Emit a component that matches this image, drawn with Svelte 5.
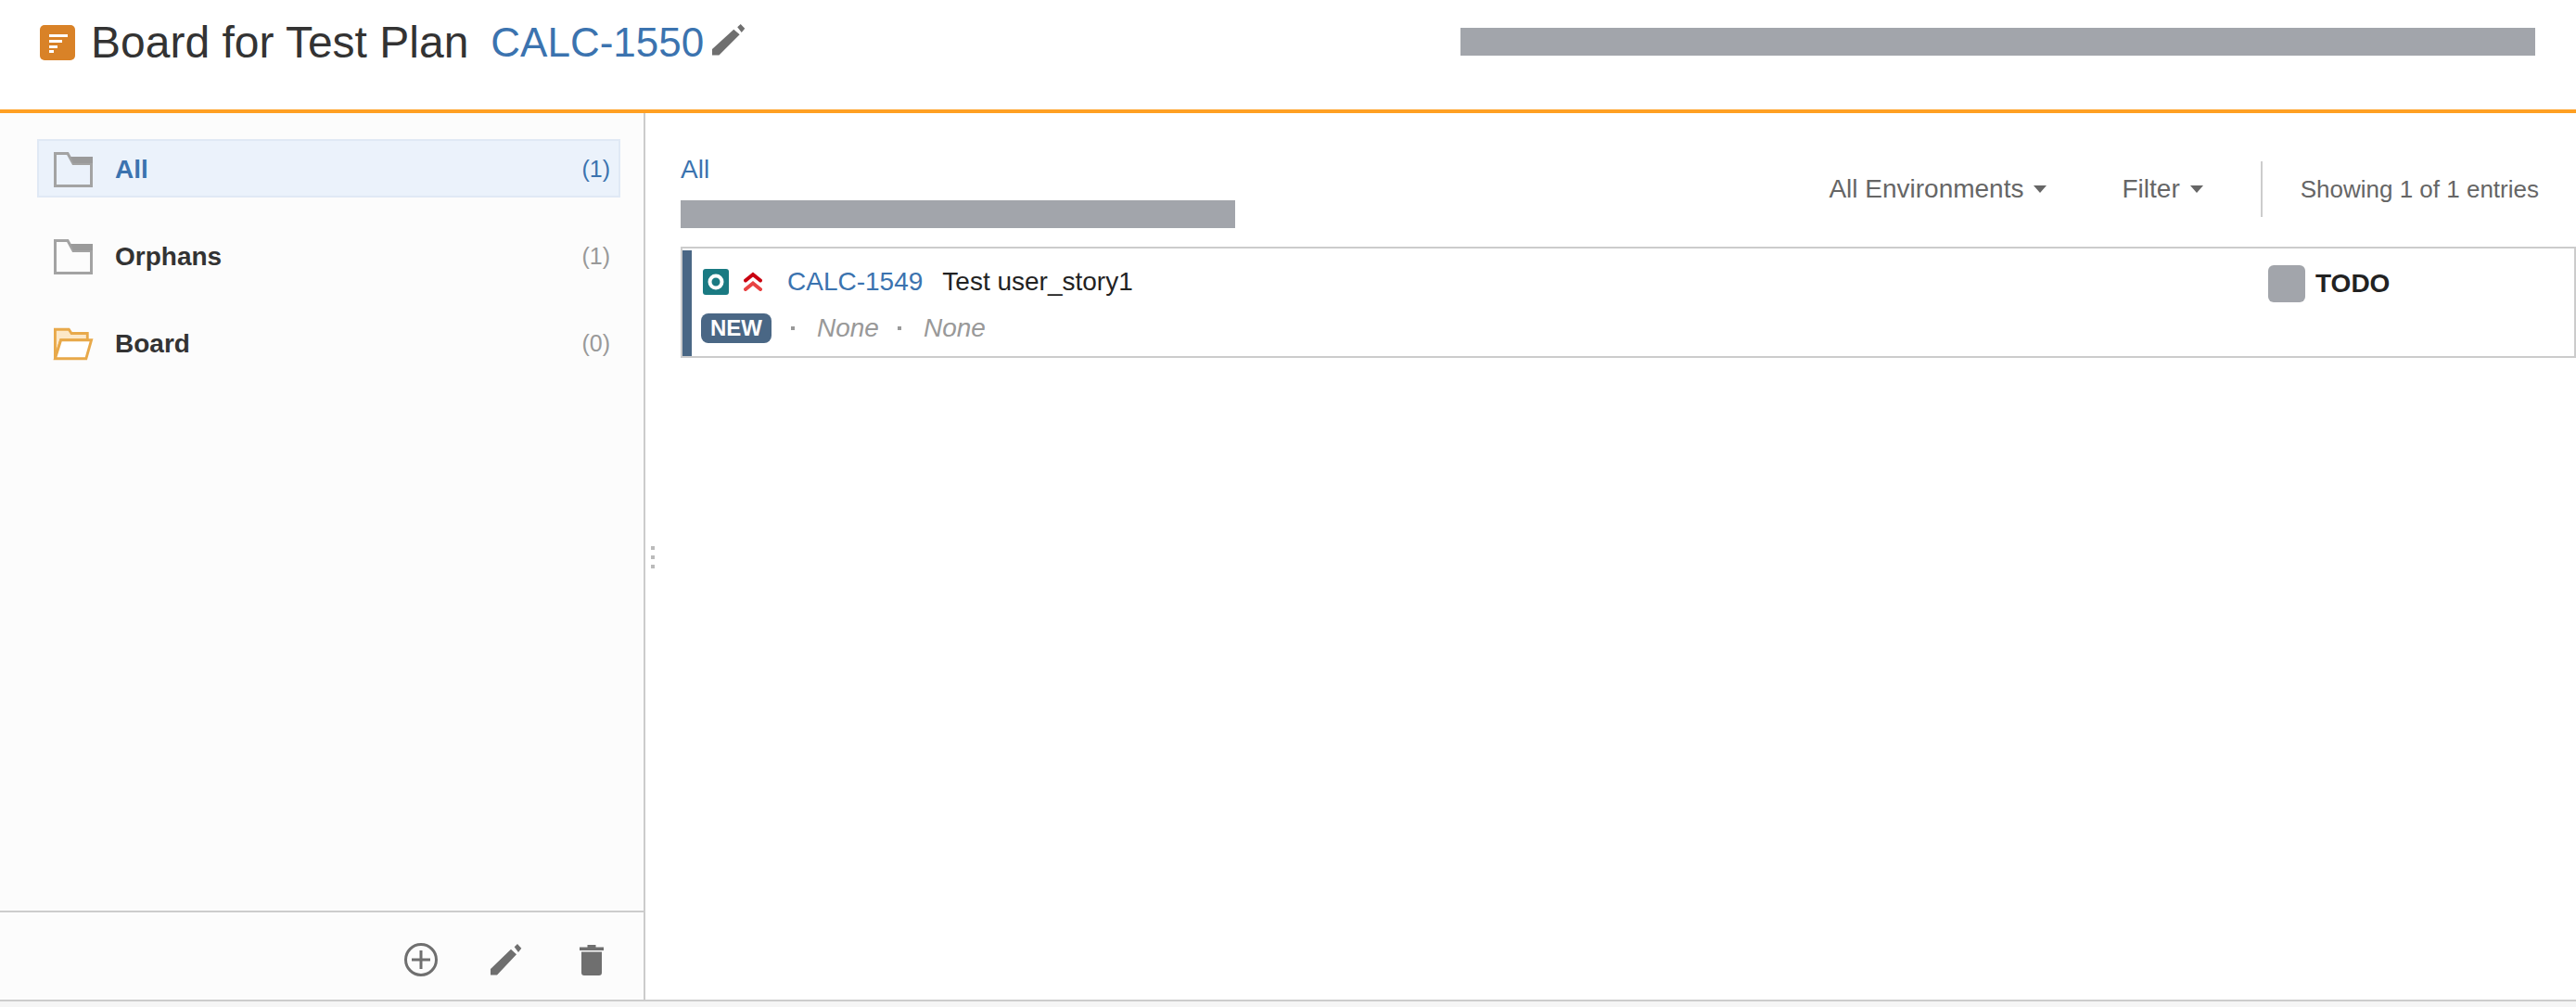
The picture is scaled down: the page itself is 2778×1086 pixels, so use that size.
<script lang="ts">
	// Folder tree entries on the left
	const folders = [
		{ name: 'All', count: 1, kind: 'plain', active: true },
		{ name: 'Orphans', count: 1, kind: 'plain', active: false },
		{ name: 'Board', count: 0, kind: 'open', active: false }
	];
</script>

<div class="page">
	<header class="header">
		<div class="title-row">
			<svg class="board-icon" width="38" height="38" viewBox="0 0 38 38">
				<rect width="38" height="38" rx="5" fill="#d98227" />
				<path d="M10 10h20v3H10zM10 16h14v3H10zM10 22h9v3h-9zM10 27h5v3h-5z" fill="#fff" />
			</svg>
			<h1 class="title">Board for Test Plan</h1>
			<a class="plan-key" href="#top">CALC-1550</a>
			<svg class="title-pencil" width="36" height="34" viewBox="0 0 34 34" preserveAspectRatio="none">
				<path d="M0 33.500V27L22 5.700 28 11.300 7 33.500z M25.700 3.300 29 0l4.300 4.700L30 9z" fill="#6f6f6f" />
			</svg>
			<div class="redacted top-redacted"></div>
		</div>
	</header>

	<div class="body">
		<aside class="sidebar">
			<ul class="folders">
				{#each folders as folder}
					<li class="folder" class:active={folder.active}>
						{#if folder.kind === 'plain'}
							<svg class="folder-icon" width="42" height="38" viewBox="0 0 42 38">
								<path d="M1.500 1.500H15L21 12.500H40.500V36.500H1.500Z" fill="none" stroke="#a3a3a3" stroke-width="3" />
								<path d="M18 5H42V12H21Z" fill="#9a9a9a" />
							</svg>
						{:else}
							<svg class="folder-icon" width="44" height="36" viewBox="0 0 44 36">
								<path d="M1.500 34.500V1.500H17L20 6H38V13.500H8Z" fill="#fce8c8" stroke="#e8a94a" stroke-width="3" />
								<path d="M1.500 34.500 8 13.500H42.500L36.500 34.500Z" fill="#fff" stroke="#e8a94a" stroke-width="3" />
							</svg>
						{/if}
						<span class="folder-name">{folder.name}</span>
						<span class="folder-count">({folder.count})</span>
					</li>
				{/each}
			</ul>
			<div class="sidebar-actions">
				<svg width="38" height="38" viewBox="0 0 38 38">
					<circle cx="19" cy="19" r="16.500" fill="none" stroke="#6f6f6f" stroke-width="3" />
					<path d="M19 9v20M9 19h20" stroke="#6f6f6f" stroke-width="3" />
				</svg>
				<svg width="34" height="34" viewBox="0 0 34 34">
					<path d="M0 33.500V27L22 5.700 28 11.300 7 33.500z M25.700 3.300 29 0l4.300 4.700L30 9z" fill="#6f6f6f" />
				</svg>
				<svg class="trash" width="26" height="33" viewBox="0 0 26 33">
					<path d="M0 2.500h8.500V0h9v2.500H26V6H0zM2 7.500h22V30a3 3 0 0 1-3 3H5a3 3 0 0 1-3-3z" fill="#6f6f6f" />
				</svg>
			</div>
		</aside>

		<main class="content">
			<div class="drag-handle"><i></i><i></i><i></i></div>
			<div class="toolbar">
				<div class="crumbs">
					<a class="crumb" href="#top">All</a>
					<div class="redacted crumb-redacted"></div>
				</div>
				<div class="controls">
					<span class="dropdown env">All Environments<b class="caret"></b></span>
					<span class="dropdown filter">Filter<b class="caret"></b></span>
					<span class="divider"></span>
					<span class="entries">Showing 1 of 1 entries</span>
				</div>
			</div>

			<div class="card">
				<div class="card-bar"></div>
				<div class="card-main">
					<div class="line-one">
						<svg class="type-icon" width="28" height="28" viewBox="0 0 28 28">
							<rect width="28" height="28" rx="3" fill="#1a7a82" />
							<circle cx="14" cy="14" r="6.500" fill="none" stroke="#fff" stroke-width="4" />
						</svg>
						<svg class="priority-icon" width="20" height="22" viewBox="0 0 20 22">
							<path d="M2 9.500 10 3l8 6.500" fill="none" stroke="#c9000f" stroke-width="4" stroke-linecap="round" />
							<path d="M2 19 10 12.500 18 19" fill="none" stroke="#e84343" stroke-width="4" stroke-linecap="round" />
						</svg>
						<a class="issue-key" href="#top">CALC-1549</a>
						<span class="issue-title">Test user_story1</span>
					</div>
					<div class="line-two">
						<span class="badge">NEW</span>
						<span class="dot first"></span>
						<em class="none">None</em>
						<span class="dot"></span>
						<em class="none">None</em>
					</div>
				</div>
				<div class="status">
					<span class="status-box"></span>
					<span class="status-text">TODO</span>
				</div>
			</div>
		</main>
	</div>
	<div class="page-foot"></div>
</div>

<style>
	:global(body) {
		background: #fff;
	}

	.page {
		display: flex;
		flex-direction: column;
		height: 1086px;
		font-family: 'Liberation Sans', Arial, sans-serif;
		font-size: 28px;
		color: #333;
	}

	a {
		color: #3b73af;
		text-decoration: none;
	}

	.redacted {
		background: #a2a5ab;
	}

	/* Header */
	.header {
		height: 118px;
		flex: none;
		border-bottom: 4px solid #ffa023;
	}

	.title-row {
		display: flex;
		align-items: center;
		height: 90px;
		padding: 0 44px 0 43px;
	}

	.board-icon {
		flex: none;
		margin: 2px 17px 0 0;
	}

	.title {
		margin: 2px 24px 0 0;
		font-size: 48px;
		font-weight: 400;
		line-height: 56px;
		color: #333;
	}

	.plan-key {
		margin-top: 2px;
		font-size: 44px;
		line-height: 56px;
	}

	.title-pencil {
		margin-left: 9px;
		margin-top: -5px;
	}

	.top-redacted {
		width: 1159px;
		height: 30px;
		margin-left: auto;
	}

	/* Body columns */
	.body {
		flex: 1;
		display: flex;
		min-height: 0;
		border-bottom: 2px solid #ccc;
	}

	.sidebar {
		flex: none;
		width: 694px;
		display: flex;
		flex-direction: column;
		background: #fcfcfc;
		border-right: 2px solid #ccc;
	}

	.folders {
		flex: 1;
		display: flex;
		flex-direction: column;
		gap: 31px;
		margin: 0;
		padding: 28px 25px 0 40px;
		list-style: none;
	}

	.folder {
		display: flex;
		align-items: center;
		height: 63px;
		box-sizing: border-box;
		padding: 2px 9px 0 16px;
		border: 2px solid transparent;
	}

	.folder.active {
		background: #ebf2fb;
		border-color: #e0e9f5;
	}

	.folder-icon {
		flex: none;
		width: 42px;
		margin-right: 24px;
		overflow: visible;
	}

	.folder-name {
		flex: 1;
		font-weight: 700;
	}

	.folder.active .folder-name,
	.folder.active .folder-count {
		color: #3b73af;
	}

	.folder-count {
		font-size: 25px;
		color: #999;
	}

	.sidebar-actions {
		flex: none;
		display: flex;
		align-items: center;
		gap: 56px;
		justify-content: flex-end;
		height: 96px;
		box-sizing: border-box;
		padding: 8px 43px 0 0;
		border-top: 2px solid #ccc;
	}

	.trash {
		margin-left: 6px;
	}

	/* Main column */
	.content {
		position: relative;
		flex: 1;
		min-width: 0;
		padding: 0 0 0 38px;
	}

	.drag-handle {
		position: absolute;
		left: 6px;
		top: 467px;
		display: flex;
		flex-direction: column;
		gap: 6px;
	}

	.drag-handle i {
		width: 4px;
		height: 4px;
		background: #bbb;
	}

	.toolbar {
		display: flex;
		align-items: center;
		justify-content: space-between;
		height: 144px;
		box-sizing: border-box;
		padding: 40px 40px 20px 0;
	}

	.crumb {
		display: block;
		padding-top: 1px;
		line-height: 39px;
	}

	.crumb-redacted {
		width: 598px;
		height: 30px;
		margin-top: 14px;
	}

	.controls {
		display: flex;
		align-items: center;
		color: #666;
	}

	.dropdown {
		display: flex;
		align-items: center;
		line-height: 40px;
	}

	.caret {
		width: 0;
		height: 0;
		margin-left: 11px;
		border-top: 8px solid #666;
		border-left: 7.500px solid transparent;
		border-right: 7.500px solid transparent;
	}

	.env {
		margin-right: 81px;
	}

	.divider {
		width: 2px;
		height: 60px;
		margin: 0 41px 0 62px;
		background: #ccc;
	}

	.entries {
		font-size: 26px;
	}

	/* Result card */
	.card {
		display: flex;
		height: 120px;
		box-sizing: border-box;
		border: 2px solid #ccc;
		background: #fff;
	}

	.card-bar {
		flex: none;
		width: 10px;
		margin-top: 2px;
		background: #4a6785;
	}

	.card-main {
		flex: 1;
		min-width: 0;
		padding: 22px 0 0 10px;
	}

	.line-one {
		display: flex;
		align-items: center;
		height: 28px;
		padding-left: 2px;
	}

	.priority-icon {
		margin-left: 16px;
	}

	.issue-key {
		margin-left: 27px;
	}

	.issue-title {
		margin-left: 21px;
		color: #222;
	}

	.line-two {
		display: flex;
		align-items: center;
		margin-top: 20px;
	}

	.badge {
		display: block;
		width: 76px;
		height: 32px;
		border-radius: 8px;
		background: #4a6785;
		color: #fff;
		font-size: 24px;
		font-weight: 700;
		line-height: 32px;
		text-align: center;
	}

	.dot {
		width: 4px;
		height: 4px;
		margin: 0 24px 0 20px;
		background: #999;
	}

	.dot.first {
		margin-left: 21px;
	}

	.none {
		color: #999;
	}

	.status {
		flex: none;
		display: flex;
		width: 330px;
		padding-top: 18px;
		box-sizing: border-box;
	}

	.status-box {
		width: 40px;
		height: 40px;
		border-radius: 6px;
		background: #a2a5ab;
	}

	.status-text {
		margin-left: 11px;
		font-weight: 700;
		line-height: 40px;
		color: #222;
	}

	.page-foot {
		flex: none;
		height: 6px;
		background: #f5f5f5;
	}
</style>
